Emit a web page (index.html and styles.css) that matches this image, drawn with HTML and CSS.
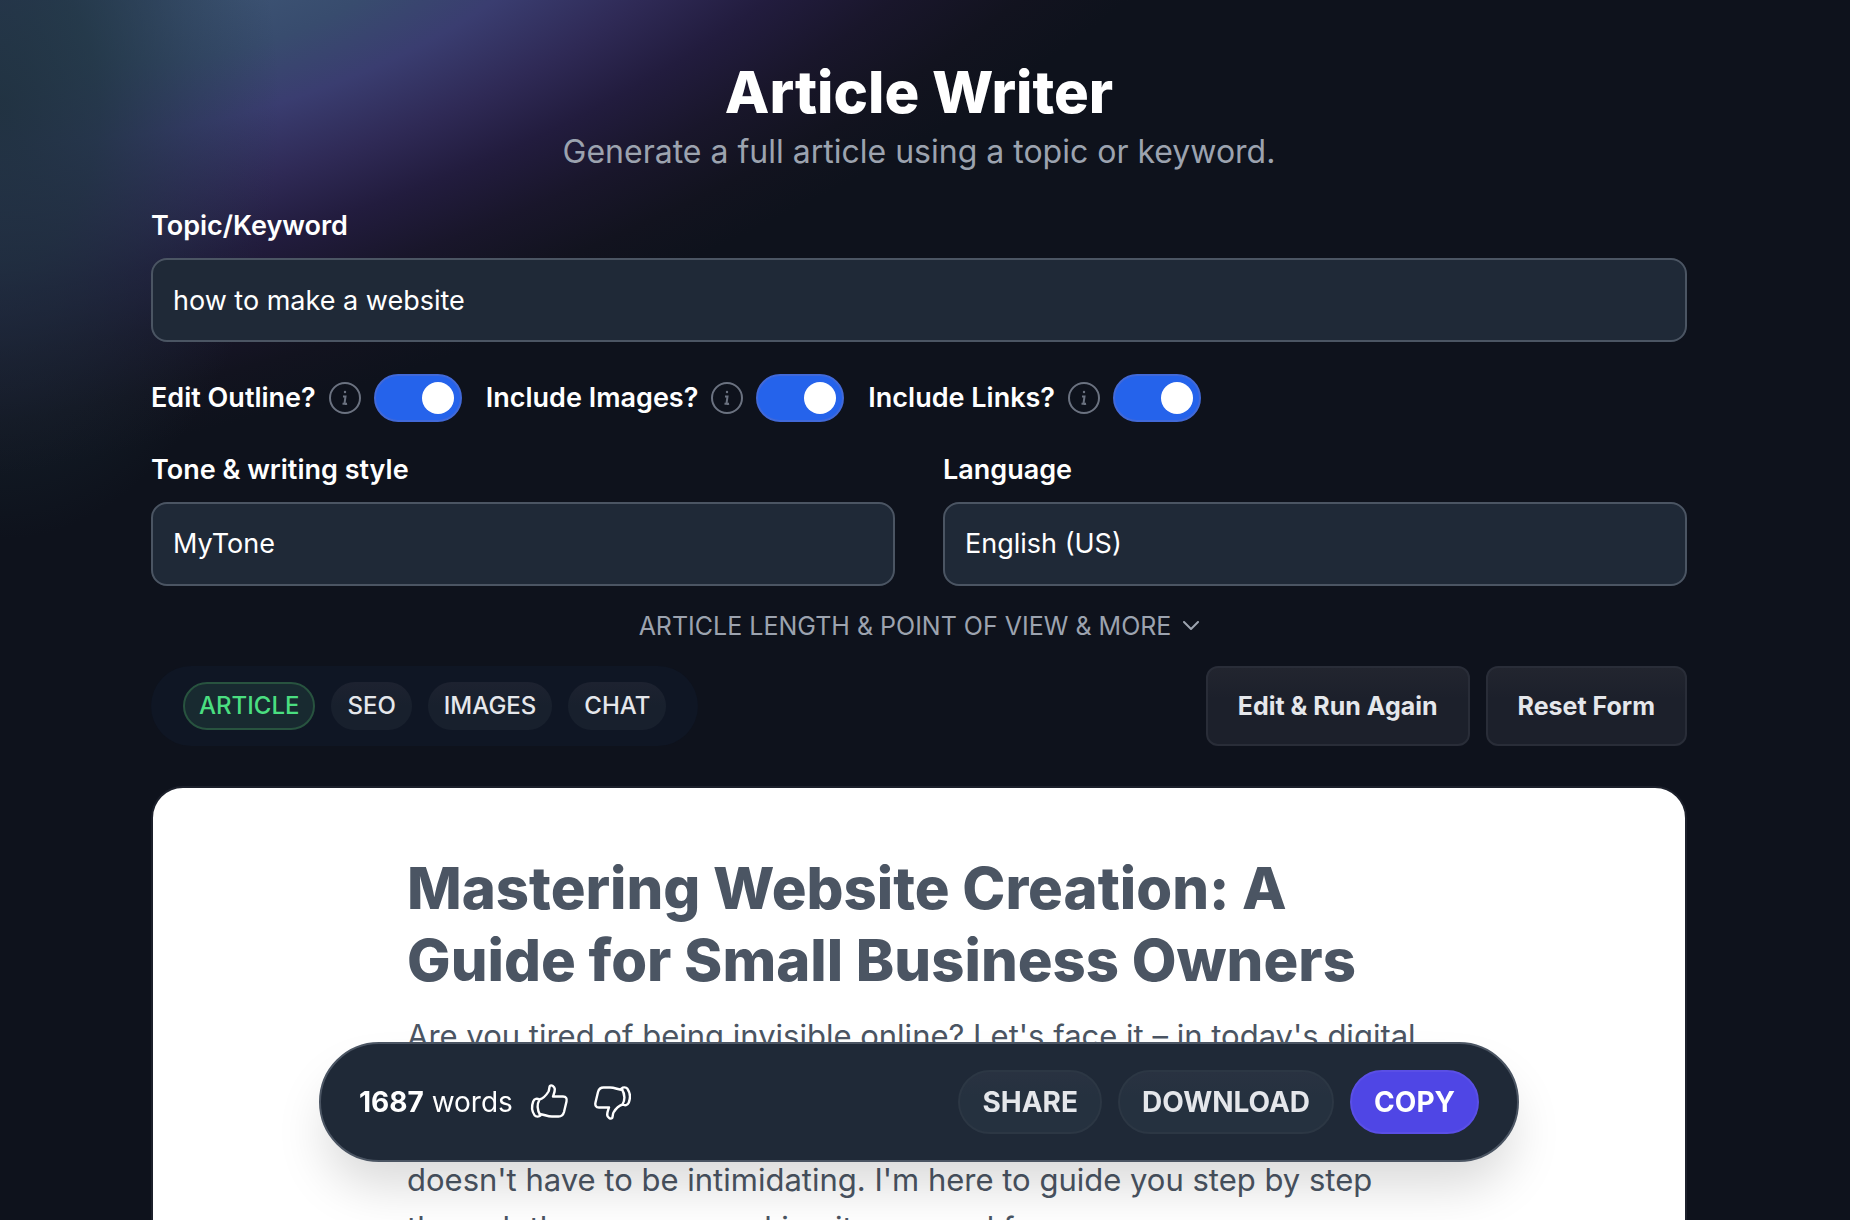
FILE: index.html
```
<!DOCTYPE html>
<html lang="en">
    <head>
        <meta charset="utf-8">
        <title>Article Writer</title>
        <link rel="stylesheet" href="styles.css">
    </head>
    <body>
        <svg class="sprite" width="0" height="0" aria-hidden="true">
            <symbol id="info" viewBox="0 0 32 32">
                <circle cx="16" cy="16" r="15" fill="none" stroke="currentColor" stroke-width="2"/>
                <circle cx="16" cy="10" r="1.200" fill="currentColor"/>
                <path d="M14 14.500h2.500l-1 7q0 1 2.500 .2M13.500 21.800h4.500" fill="none" stroke="currentColor" stroke-width="2"/>
            </symbol>
            <symbol id="thumb" viewBox="0 0 40 40">
                <path d="M10.500 17.500C14 16.500 18 12 19.500 9.500C20.500 7.500 20 5 21 3.800C22.500 2.500 25.500 4.500 25.800 7C26 10 24.500 12.500 24 14.500H34C37 14.500 38.200 16.500 37.500 19.500L35 30C34.200 33 32.500 34.500 29.500 34.500H23C18 34.500 15.500 32.500 10.500 32M10.500 17.500C8 22 8 28 11.500 33.500M10.500 17.500C8 16.300 5.500 16.500 4.200 19.500C2.500 24 3 29.500 5.500 33.200C7 35 10 35 11.500 33.500" fill="none" stroke="currentColor" stroke-width="2.400" stroke-linecap="round" stroke-linejoin="round"/>
            </symbol>
        </svg>
        <div class="page">
            <header class="header">
                <h1>Article Writer</h1>
                <p>Generate a full article using a topic or keyword.</p>
            </header>
            <form class="form">
                <div class="field">
                    <label for="topic">Topic/Keyword</label>
                    <input id="topic" class="control" type="text" value="how to make a website">
                </div>
                <div class="toggles">
                    <div class="toggle">
                        <label for="outline">Edit Outline?</label>
                        <svg class="info"><use href="#info"/></svg>
                        <input id="outline" class="switch" type="checkbox" checked>
                    </div>
                    <div class="toggle">
                        <label for="images">Include Images?</label>
                        <svg class="info"><use href="#info"/></svg>
                        <input id="images" class="switch" type="checkbox" checked>
                    </div>
                    <div class="toggle">
                        <label for="links">Include Links?</label>
                        <svg class="info"><use href="#info"/></svg>
                        <input id="links" class="switch" type="checkbox" checked>
                    </div>
                </div>
                <div class="columns">
                    <div class="field">
                        <label for="tone">Tone &amp; writing style</label>
                        <select id="tone" class="control">
                            <option>MyTone</option>
                        </select>
                    </div>
                    <div class="field">
                        <label for="language">Language</label>
                        <select id="language" class="control">
                            <option>English (US)</option>
                        </select>
                    </div>
                </div>
                <button class="more" type="button">
                    ARTICLE LENGTH &amp; POINT OF VIEW &amp; MORE
                    <svg width="16" height="10" viewBox="0 0 16 10" fill="none" stroke="currentColor" stroke-width="2" stroke-linecap="round" stroke-linejoin="round"><path d="M1 1l7 7 7-7"/></svg>
                </button>
            </form>
            <div class="toolbar">
                <nav class="tabs">
                    <button class="tab active" type="button">ARTICLE</button>
                    <button class="tab" type="button">SEO</button>
                    <button class="tab" type="button">IMAGES</button>
                    <button class="tab" type="button">CHAT</button>
                </nav>
                <div class="actions">
                    <button class="action" type="button">Edit &amp; Run Again</button>
                    <button class="action" type="button">Reset Form</button>
                </div>
            </div>
            <main class="card">
                <article class="article">
                    <h2>Mastering Website Creation: A Guide for Small Business Owners</h2>
                    <p>
                        Are you tired of being invisible online? Let's face it – in today's digital<br>
                        <br>
                        <br>
                        doesn't have to be intimidating. I'm here to guide you step by step<br>
                        through the process, making it easy and fun.
                    </p>
                </article>
            </main>
        </div>
        <div class="dock">
            <p class="count"><strong>1687</strong> words</p>
            <button class="vote" type="button" aria-label="Like"><svg><use href="#thumb"/></svg></button>
            <button class="vote down" type="button" aria-label="Dislike"><svg><use href="#thumb"/></svg></button>
            <div class="dock-actions">
                <button class="pill" type="button">SHARE</button>
                <button class="pill" type="button">DOWNLOAD</button>
                <button class="pill primary" type="button">COPY</button>
            </div>
        </div>
    </body>
</html>
```
FILE: styles.css
```
* {
    box-sizing: border-box;
    margin: 0;
    padding: 0;
}
html {
    height: 100%;
    overflow: hidden;
    background-color: #0e121c;
}
body {
    position: relative;
    isolation: isolate;
    height: 100%;
    overflow: hidden;
    padding-right: 12px;
    font-family: Inter, "Liberation Sans", sans-serif;
    font-size: 28px;
    line-height: 40px;
    color: #fff;
}
/* coloured glow in the top left corner */
body::before {
    content: "";
    position: absolute;
    z-index: -1;
    left: -900px;
    top: -440px;
    width: 2300px;
    height: 840px;
    transform: rotate(-18deg);
    background: radial-gradient(closest-side, #3d5474 0, #384c6e 15%, #3a3d70 30%, #2f2a56 46%, #221c3e 60%, #19162b 74%, #12131f 88%, rgba(14, 18, 28, 0) 100%);
}
body::after {
    content: "";
    position: absolute;
    z-index: -1;
    left: -280px;
    top: -320px;
    width: 560px;
    height: 860px;
    background: radial-gradient(closest-side, rgba(29, 48, 58, 0.85) 0, rgba(29, 50, 60, 0.7) 35%, rgba(29, 50, 62, 0.3) 70%, rgba(29, 50, 62, 0) 100%);
}
button, input, select {
    font: inherit;
    color: inherit;
}
button {
    border: 0;
    background: none;
    cursor: pointer;
}
.sprite {
    position: absolute;
}
.page {
    max-width: 1536px;
    margin: 0 auto;
    padding-top: 56px;
}
.header {
    text-align: center;
    margin-bottom: 30px;
}
.header h1 {
    font-size: 58px;
    line-height: 72px;
    font-weight: 800;
}
.header p {
    font-size: 32px;
    line-height: 48px;
    color: #9ca3af;
}
.field {
    display: flex;
    flex-direction: column;
    gap: 12px;
}
label {
    font-size: 27px;
    font-weight: 600;
}
.control {
    width: 100%;
    height: 84px;
    padding: 0 20px;
    border: 2px solid #4b5563;
    border-radius: 16px;
    font-size: 27px;
    background-color: #1f2937;
    appearance: none;
    outline: none;
}
.toggles {
    display: flex;
    gap: 24px;
    margin: 32px 0 28px;
}
.toggle {
    display: flex;
    align-items: center;
    gap: 13px;
}
.info {
    width: 32px;
    height: 32px;
    color: #6b7280;
}
.switch {
    display: flex;
    align-items: center;
    justify-content: flex-end;
    width: 88px;
    height: 48px;
    padding: 0 6px;
    border: 2px solid #4169d8;
    border-radius: 24px;
    background-color: #2563eb;
    appearance: none;
}
.switch::before {
    content: "";
    width: 32px;
    height: 32px;
    border-radius: 50%;
    background-color: #fff;
}
.columns {
    display: grid;
    grid-template-columns: 1fr 1fr;
    gap: 48px;
}
.more {
    display: flex;
    align-items: center;
    justify-content: center;
    gap: 12px;
    width: 100%;
    height: 80px;
    font-size: 25px;
    color: #9ca3af;
}
.toolbar {
    display: flex;
    justify-content: space-between;
    margin-bottom: 40px;
}
.tabs {
    display: flex;
    align-items: center;
    gap: 16px;
    height: 80px;
    padding: 0 32px;
    border-radius: 40px;
    background-color: #0f1624;
}
.tab {
    height: 48px;
    padding: 0 16px;
    border-radius: 24px;
    font-size: 24px;
    font-weight: 500;
    color: #e5e7eb;
    background-image: linear-gradient(#1d2230, #18202d 50%);
}
.tab.active {
    padding: 0 14px;
    border: 2px solid #28533f;
    color: #4ade80;
    background: #182a30;
}
.actions {
    display: flex;
    gap: 16px;
}
.action {
    height: 80px;
    padding: 0 30px;
    border: 2px solid #292d38;
    border-radius: 12px;
    font-size: 25px;
    font-weight: 700;
    color: #e5e7eb;
    background: linear-gradient(#22252f, #1c202b 40%);
}
.card {
    padding: 64px 0;
    border: 2px solid #1c202b;
    border-radius: 32px;
    background-color: #fff;
}
.article {
    max-width: 1024px;
    margin: 0 auto;
    color: #4b5563;
}
.article h2 {
    margin-bottom: 16px;
    font-size: 58px;
    line-height: 72px;
    font-weight: 800;
}
.article p {
    font-size: 31px;
    line-height: 48px;
}
/* floating bar over the article */
.dock {
    position: fixed;
    left: 0;
    right: 12px;
    bottom: 58px;
    display: flex;
    align-items: center;
    max-width: 1200px;
    height: 120px;
    margin: 0 auto;
    padding: 0 38px;
    border: 2px solid #4b5563;
    border-radius: 60px;
    background-color: #1f2937;
    box-shadow: 0 30px 50px -6px rgba(0, 0, 0, 0.15);
}
.count {
    margin-right: 16px;
}
.vote {
    width: 40px;
    height: 40px;
    margin-right: 24px;
}
.vote svg {
    display: block;
    width: 40px;
    height: 40px;
}
.vote.down {
    transform: rotate(180deg);
}
.dock-actions {
    display: flex;
    gap: 16px;
    margin-left: auto;
}
.pill {
    height: 64px;
    padding: 0 22px;
    border: 2px solid #2c3744;
    border-radius: 32px;
    font-weight: 700;
    color: #e5e7eb;
    background: linear-gradient(#293241, #25313f 40%);
}
.pill.primary {
    border-color: #5a4fe6;
    color: #fff;
    background: #4f46e5;
}
```
